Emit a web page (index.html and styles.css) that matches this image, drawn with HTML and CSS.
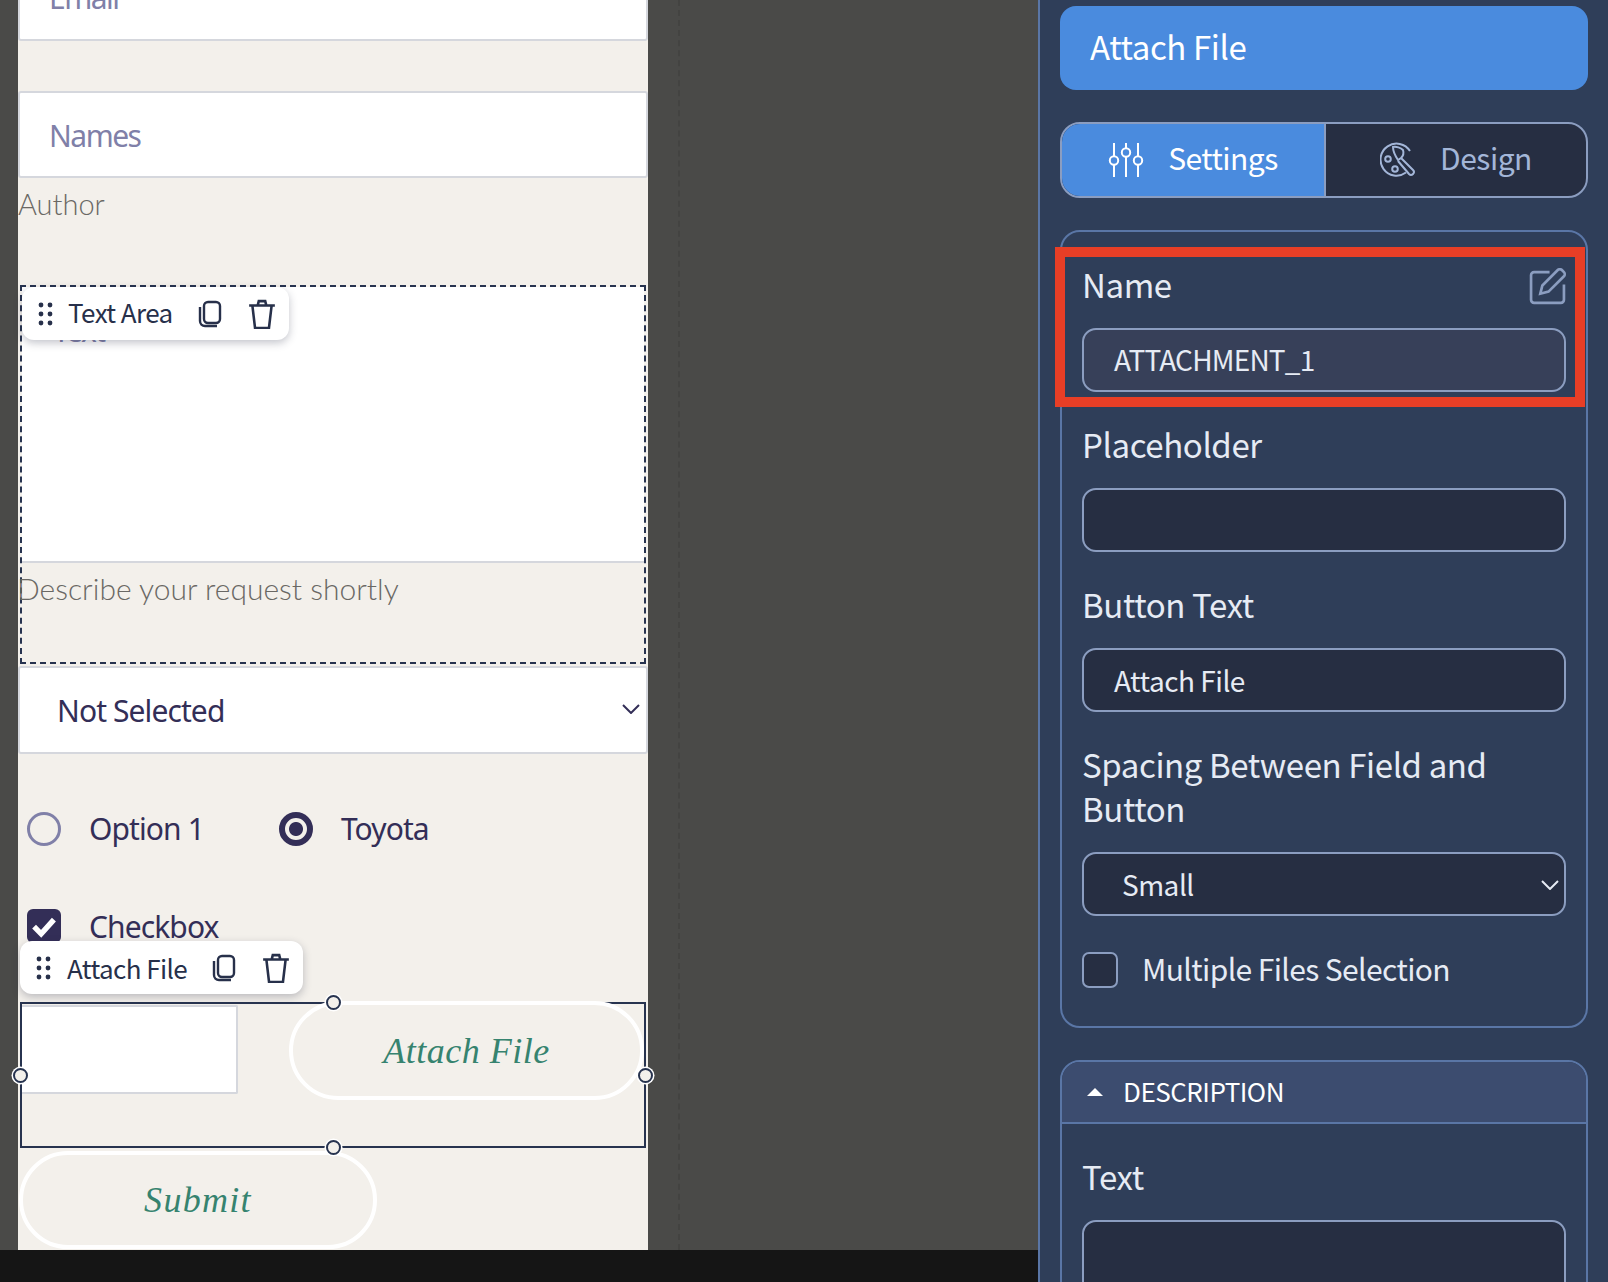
FILE: index.html
```html
<!DOCTYPE html>
<html lang="en">
<head>
<meta charset="utf-8">
<title>Form builder</title>
<link rel="stylesheet" href="styles.css">
</head>
<body>
<div class="app">
  <main class="workspace">
    <div class="stage">
      <section class="canvas">
        <div class="field field-email"><span class="ph">Email</span></div>
        <div class="field field-names"><span class="ph">Names</span></div>
        <div class="caption caption-author">Author</div>

        <div class="textarea-block">
          <div class="textarea-box"><span class="ph ph-text">Text</span></div>
          <div class="caption caption-desc">Describe your request shortly</div>
          <div class="toolbar toolbar-text">
            <svg class="ic-drag" viewBox="0 0 16 24"><circle cx="3" cy="3" r="2.4"/><circle cx="12" cy="3" r="2.4"/><circle cx="3" cy="12" r="2.4"/><circle cx="12" cy="12" r="2.4"/><circle cx="3" cy="21" r="2.4"/><circle cx="12" cy="21" r="2.4"/></svg>
            <span class="toolbar-label">Text Area</span>
            <svg class="ic-tool" viewBox="0 0 26 28"><rect x="7" y="2" width="16" height="21" rx="4"/><path d="M3 7v14a5 5 0 0 0 5 5h12"/></svg>
            <svg class="ic-tool ic-trash" viewBox="0 0 26 28"><path d="M1 6h24M9 6l1-4h6l1 4M4 6l2.500 21h13L22 6"/></svg>
          </div>
        </div>

        <div class="field field-select"><span class="select-value">Not Selected</span>
          <svg class="chev" viewBox="0 0 18 10"><path d="M1 1l8 8 8-8"/></svg>
        </div>

        <div class="radios">
          <label class="choice"><span class="radio"></span><span>Option 1</span></label>
          <label class="choice"><span class="radio radio-on"></span><span>Toyota</span></label>
        </div>

        <label class="choice check-row"><span class="check"><svg viewBox="0 0 24 24"><path d="M5 12.5l5 5 9-10"/></svg></span><span>Checkbox</span></label>

        <div class="attach-block">
          <div class="toolbar toolbar-attach">
            <svg class="ic-drag" viewBox="0 0 16 24"><circle cx="3" cy="3" r="2.4"/><circle cx="12" cy="3" r="2.4"/><circle cx="3" cy="12" r="2.4"/><circle cx="12" cy="12" r="2.4"/><circle cx="3" cy="21" r="2.4"/><circle cx="12" cy="21" r="2.4"/></svg>
            <span class="toolbar-label">Attach File</span>
            <svg class="ic-tool" viewBox="0 0 26 28"><rect x="7" y="2" width="16" height="21" rx="4"/><path d="M3 7v14a5 5 0 0 0 5 5h12"/></svg>
            <svg class="ic-tool ic-trash" viewBox="0 0 26 28"><path d="M1 6h24M9 6l1-4h6l1 4M4 6l2.500 21h13L22 6"/></svg>
          </div>
          <div class="selected">
            <div class="file-box"></div>
            <div class="pill pill-attach">Attach File</div>
            <i class="handle h-top"></i><i class="handle h-left"></i><i class="handle h-right"></i><i class="handle h-bottom"></i>
          </div>
        </div>

        <div class="pill pill-submit">Submit</div>
      </section>
      <div class="guide"></div>
    </div>
    <div class="bottom-bar"></div>
  </main>

  <aside class="panel">
    <div class="panel-title">Attach File</div>

    <div class="tabs">
      <div class="tab tab-on">
        <svg class="tab-ic" viewBox="0 0 36 36"><path d="M6 1v13M6 23v12M18 1v5M18 15v20M30 1v13M30 23v12"/><circle cx="6" cy="18.5" r="4.2"/><circle cx="18" cy="10.5" r="4.2"/><circle cx="30" cy="18.5" r="4.2"/></svg>
        <span>Settings</span>
      </div>
      <div class="tab">
        <svg class="tab-ic" viewBox="0 0 36 36"><path d="M26 30.500A16 16 0 1 1 30 9"/><circle cx="8" cy="17" r="2.800"/><circle cx="15" cy="27" r="2.800"/><path d="M13 5c3-1 8 1 10 3 1 3 0 6-2 8l-3 2c-2-3-5-8-5-13z"/><path d="M21 16l12 12c1.200 1.200 1.200 2.800 0 4s-2.800 1.200-4 0L18 19"/></svg>
        <span>Design</span>
      </div>
    </div>

    <section class="group">
      <div class="highlight">
        <div class="label-row"><span class="label">Name</span>
          <svg class="ic-edit" viewBox="0 0 36 36"><path d="M20 4H5a3 3 0 0 0-3 3v24a3 3 0 0 0 3 3h26a3 3 0 0 0 3-3V16"/><path d="M11 25l2-8L28 2c1-1 3-1 4 0l2 2c1 1 1 3 0 4L19 23z"/></svg>
        </div>
        <div class="input input-name">ATTACHMENT_1</div>
      </div>

      <div class="label label-first">Placeholder</div>
      <div class="input"></div>

      <div class="label label-gap">Button Text</div>
      <div class="input">Attach File</div>

      <div class="label label-gap label-two">Spacing Between Field and Button</div>
      <div class="input input-select"><span>Small</span>
        <svg class="chev chev-light" viewBox="0 0 18 10"><path d="M1 1l8 8 8-8"/></svg>
      </div>

      <label class="panel-check"><span class="panel-box"></span><span class="panel-check-text">Multiple Files Selection</span></label>
    </section>

    <section class="group group-desc">
      <header class="group-head"><span class="caret"></span><span class="group-title">DESCRIPTION</span></header>
      <div class="group-body">
        <div class="label">Text</div>
        <div class="input input-last"></div>
      </div>
    </section>
  </aside>
</div>
</body>
</html>
```
FILE: styles.css
```css
* { box-sizing: border-box; }
html, body { margin: 0; height: 1282px; overflow: hidden; }
body { background: #4a4a48; font-family: "Noto Sans CJK JP", "Noto Sans", sans-serif; }
svg { display: block; fill: none; }

.app { display: flex; height: 1282px; }
.workspace { width: 1038px; display: flex; flex-direction: column; }
.stage { flex: 1; min-height: 0; display: flex; padding-left: 18px; overflow: hidden; }
.bottom-bar { height: 32px; background: #151515; }
.guide { width: 0; margin-left: 30px; border-left: 2px dashed #434341; }

.canvas { display: flow-root; width: 630px; height: 1250px; background: #f3f0eb; font-family: "Noto Sans", sans-serif; color: #332e57; }

.field { background: #fff; border: 2px solid #d5d7dd; border-radius: 3px; display: flex; align-items: center; }
.field-email { height: 87px; margin-top: -46px; padding-left: 29px; }
.field-names { height: 87px; margin-top: 50px; padding-left: 29px; }
.field-names .ph { margin-top: 2px; }
.ph { font-size: 30px; letter-spacing: -1.500px; color: #8080a8; }
.caption { font-family: Lato, sans-serif; font-weight: 300; font-size: 29px; color: #6a6864; }
.caption-author { height: 54px; line-height: 52px; margin-bottom: 53px; }

.textarea-block { position: relative; height: 379px; margin: 0 2px; border: 2px dashed #27334f; }
.textarea-box { height: 276px; background: #fff; border-bottom: 2px solid #d5d7dd; padding: 24px 0 0 31px; line-height: 40px; }
.ph-text { font-size: 30px; }
.caption-desc { margin-left: -5px; line-height: 50px; font-size: 30px; }

.toolbar { position: absolute; display: flex; align-items: center; background: #fff; border-radius: 12px; box-shadow: 0 3px 8px rgba(40, 44, 70, .28); color: #27304a; font-family: "Noto Sans CJK JP", sans-serif; font-size: 26px; }
.toolbar-text { left: 0; top: 0; width: 267px; height: 53px; padding-left: 16px; }
.toolbar-attach { left: 0; top: -61px; width: 283px; height: 53px; padding-left: 16px; }
.toolbar-label { margin-left: 15px; letter-spacing: -.6px; line-height: 1; white-space: nowrap; }
.toolbar-text .toolbar-label { margin-left: 14px; margin-bottom: 3px; }
.ic-drag { width: 16px; height: 24px; flex: none; }
.ic-drag circle { fill: #27304a; }
.ic-tool { width: 26px; height: 28px; margin-left: 24px; stroke: #27304a; stroke-width: 2.400; flex: none; }
.ic-trash { margin-left: 25px; width: 28px; height: 30px; }

.field-select { height: 88px; margin-top: 2px; padding-left: 37px; position: relative; }
.select-value { font-size: 30px; letter-spacing: -.9px; }
.chev { position: absolute; right: 6px; top: 36px; width: 18px; height: 10px; stroke: #332e57; stroke-width: 2; }

.choice { display: flex; align-items: center; font-size: 30px; letter-spacing: -.9px; line-height: 40px; color: #332e57; }
.radios { display: flex; margin: 55px 0 0 9px; gap: 75px; }
.radio { width: 34px; height: 34px; border: 3px solid #8080a8; border-radius: 50%; margin-right: 28px; flex: none; }
.radio-on { border: 6px solid #332e57; background: radial-gradient(circle, #332e57 0 6.500px, transparent 7.500px); }
.check-row { margin: 58px 0 0 9px; }
.check { width: 34px; height: 34px; margin-top: -2px; border-radius: 6px; background: #332e57; margin-right: 28px; flex: none; }
.check svg { width: 34px; height: 34px; stroke: #fff; stroke-width: 3.800; }

.attach-block { position: relative; margin-top: 55px; margin-left: 2px; }
.selected { position: relative; height: 146px; margin-right: 2px; border: 2px solid #27334f; display: flex; align-items: flex-start; }
.file-box { width: 216px; height: 89px; margin-top: 1px; background: #fff; border: 2px solid #d5d7dd; border-left: 0; border-radius: 0 2px 2px 0; }
.pill { border: 4px solid #fff; border-radius: 50px; display: flex; align-items: center; justify-content: center; font-family: "Liberation Serif", serif; font-style: italic; color: #36836f; }
.pill-attach { width: 355px; height: 99px; margin: -3px 0 0 51px; letter-spacing: .5px; font-size: 36px; flex: none; }
.pill-submit { width: 358px; height: 98px; margin: 3px 0 0 1px; letter-spacing: 1.300px; font-size: 36px; }
.handle { position: absolute; width: 15px; height: 15px; border-radius: 50%; background: #f3f0eb; border: 2.500px solid #27334f; box-shadow: 0 0 0 1.500px #fff; }
.h-top { left: calc(50% - 7.500px); top: -9px; }
.h-bottom { left: calc(50% - 7.500px); bottom: -9px; }
.h-left { left: -9px; top: calc(50% - 7.500px); }
.h-right { right: -9px; top: calc(50% - 7.500px); }

.panel { width: 570px; background: #2f3e59; border-left: 2px solid #5a76a6; padding: 6px 20px 0 20px; overflow: hidden; color: #e6ebf4; }
.panel-title { height: 84px; background: #4a8bde; border-radius: 16px; padding-left: 30px; font-size: 33px; line-height: 81px; letter-spacing: -.4px; color: #fff; }

.tabs { display: flex; height: 76px; margin-top: 32px; border: 2px solid #8b9dc0; border-radius: 20px; overflow: hidden; background: #262e42; }
.tab { flex: 1; display: flex; align-items: center; justify-content: center; gap: 24px; font-size: 30px; letter-spacing: -.5px; color: #a3b6d8; }
.tab span { margin-bottom: 6px; }
.tab-on { flex: none; width: 264px; background: #4a8bde; color: #fff; border-right: 2px solid #8b9dc0; }
.tab-ic { width: 36px; height: 36px; stroke: currentColor; stroke-width: 2; }

.group { border: 2px solid #5a76a6; border-radius: 20px; margin-top: 32px; height: 798px; padding: 15px 20px 0 20px; }
.highlight { margin: 0 -19px 0 -27px; height: 160px; border: 10px solid #e83e26; padding: 10px 9px 0 17px; }
.label-row { display: flex; justify-content: space-between; align-items: center; height: 44px; }
.label-row .label { margin-bottom: 10px; }
.label { font-size: 33px; line-height: 44px; letter-spacing: -.4px; color: #e6ebf4; }
.ic-edit { width: 37px; height: 37px; stroke: #8b9dc0; stroke-width: 2.600; margin-top: -5px; }
.label-first { margin-top: 15px; }
.label-gap { margin-top: 30px; }
.label-two { padding-right: 60px; }
.input { height: 64px; margin-top: 22px; padding-left: 30px; background: #262e42; border: 2px solid #8b9dc0; border-radius: 14px; font-size: 28px; line-height: 60px; letter-spacing: -.5px; color: #e6ebf4; position: relative; }
.input-name { background: #374059; margin-top: 17px; letter-spacing: -.8px; line-height: 59px; }
.input-select { padding-left: 38px; }
.chev-light { stroke: #e6ebf4; right: 5px; top: 26px; }
.panel-check { display: flex; align-items: center; margin-top: 36px; font-size: 30px; line-height: 36px; letter-spacing: -.6px; color: #e6ebf4; }
.panel-check-text { margin-top: -4px; }
.panel-box { width: 36px; height: 36px; margin-right: 24px; background: #262e42; border: 2px solid #8b9dc0; border-radius: 7px; }

.group-desc { height: 400px; padding: 0; overflow: hidden; }
.group-head { height: 62px; display: flex; align-items: center; padding-left: 25px; gap: 20px; background: #3c4c6f; border-bottom: 2px solid #5a76a6; font-size: 26px; letter-spacing: -.5px; color: #fff; }
.group-title { margin-top: -4px; }
.caret { width: 0; height: 0; border: 8px solid transparent; border-top: 0; border-bottom: 8px solid #fff; }
.group-body { padding: 30px 20px 0 20px; }
.input-last { height: 100px; }
```
